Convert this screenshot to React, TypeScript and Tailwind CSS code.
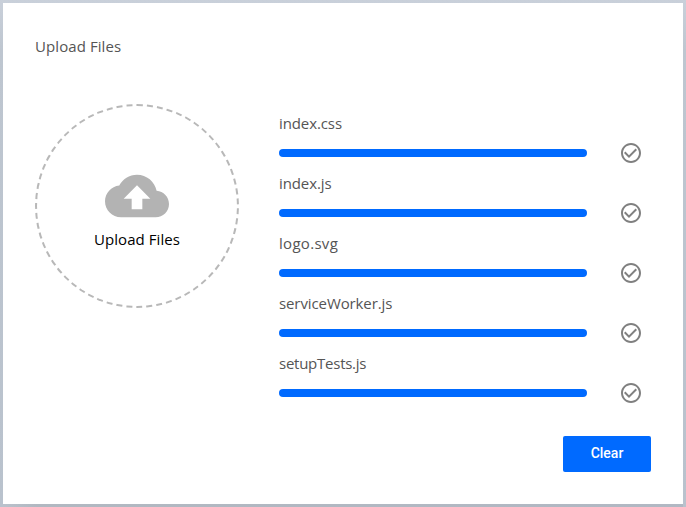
const files = [
  { name: "index.css", tracking: "tracking-[-0.1px]" },
  { name: "index.js", tracking: "tracking-[-0.1px]" },
  { name: "logo.svg", tracking: "tracking-[0.3px]" },
  { name: "serviceWorker.js", tracking: "tracking-[-0.1px]" },
  { name: "setupTests.js", tracking: "tracking-[-0.25px]" },
];

function CloudUploadIcon() {
  return (
    <svg viewBox="0 0 24 24" className="size-16 shrink-0 fill-[#b3b3b3]" aria-hidden="true">
      <path d="M19.35 10.04C18.67 6.59 15.64 4 12 4 9.11 4 6.6 5.64 5.35 8.04 2.34 8.36 0 10.91 0 14c0 3.31 2.69 6 6 6h13c2.76 0 5-2.24 5-5 0-2.64-2.05-4.78-4.65-4.96zM14 13v4h-4v-4H7l5-5 5 5h-3z" />
    </svg>
  );
}

function CheckIcon() {
  return (
    <svg viewBox="0 0 24 24" className="size-6 fill-[#808080]" aria-hidden="true">
      <path d="M16.59 7.58L10 14.17l-3.59-3.58L5 12l5 5 8-8zM12 2C6.48 2 2 6.48 2 12s4.48 10 10 10 10-4.48 10-10S17.52 2 12 2zm0 18c-4.42 0-8-3.58-8-8s3.58-8 8-8 8 3.58 8 8-3.58 8-8 8z" />
    </svg>
  );
}

export default function App() {
  return (
    <div className="h-[507px] w-[686px] bg-linear-to-b from-[#c9d0da] via-[#bec6d0] via-10% to-[#b9c2cd] font-['Open_Sans','Noto_Sans',sans-serif] text-[15px] leading-6 px-[3px] pt-[3px]">
      <main className="flex h-[501px] w-[680px] flex-col bg-white px-8 pt-[31px] text-[#555]">
        <h1 className="h-6 tracking-[0.08px]">Upload Files</h1>
        <div className="mt-[46px] flex">
          <button className="flex size-[204px] shrink-0 flex-col items-center rounded-full border-2 border-dashed border-[#b8b8b8] pt-[58px] text-black">
            <CloudUploadIcon />
            <span className="-mt-px tracking-[0.08px]">Upload Files</span>
          </button>
          <ul className="ml-10 flex-1 pt-[7px]">
            {files.map((file) => (
              <li key={file.name} className="h-[60px]">
                <div className={file.tracking}>{file.name}</div>
                <div className="mt-1.5 flex h-6 items-center gap-8">
                  <div className="h-2 w-[308px] rounded-full bg-[#006aff]" />
                  <CheckIcon />
                </div>
              </li>
            ))}
          </ul>
        </div>
        <button className="mt-[25px] h-9 w-[88px] self-end rounded-[2px] bg-[#006aff] pb-0.5 font-[Roboto,sans-serif] text-sm font-medium text-white">
          Clear
        </button>
      </main>
      <div className="h-[3px] bg-linear-to-r from-[#bac2cc] via-[#b1b8c1] via-5% to-[#b1b8c3]" />
    </div>
  );
}
